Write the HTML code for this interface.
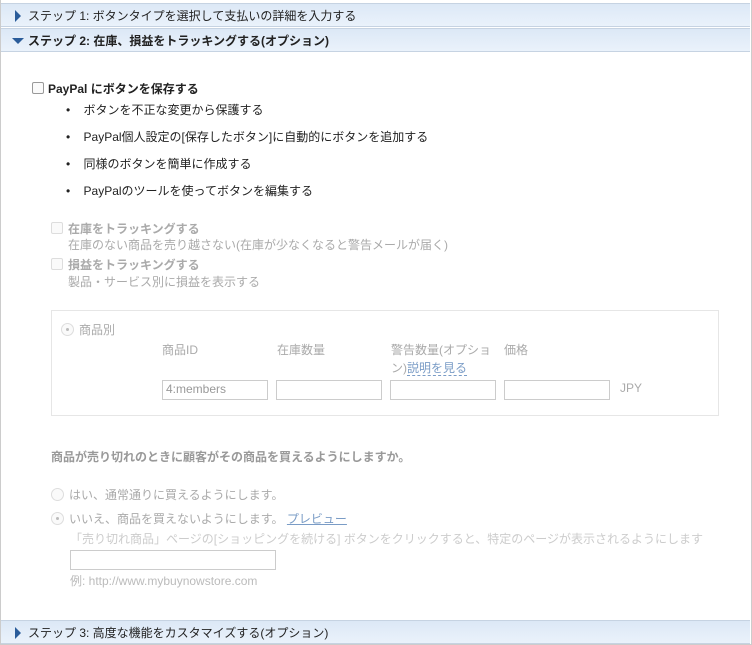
<!DOCTYPE html>
<html><head><meta charset="utf-8"><style>
body{margin:0;width:752px;height:645px;background:#fff;font-family:"Liberation Sans","Noto Sans CJK JP",sans-serif;font-size:12px;color:#333;position:relative;overflow:hidden}
.a{position:absolute;white-space:nowrap}
.hd{position:absolute;left:1px;width:749px;height:22px;background:linear-gradient(#dce8f6,#eaf2fb);border-top:1px solid #c6d3e2;border-bottom:1px solid #c6d3e2;line-height:24px;font-size:12px;color:#222}
.tri{position:absolute;left:14px;top:6px;width:0;height:0;border-left:6px solid #2a5c9a;border-top:6px solid transparent;border-bottom:6px solid transparent}
.trid{position:absolute;left:11px;top:9px;border-top:6px solid #2a5c9a;border-left:6px solid transparent;border-right:6px solid transparent}
.cb{position:absolute;width:10px;height:10px;border:1px solid #aaa;border-radius:2px;background:#fafafa}
.g{color:#aaa}
.rd{position:absolute;width:11px;height:11px;border:1px solid #ddd;border-radius:50%;background:#fafafa}
.rd.on:after{content:"";position:absolute;left:4px;top:4px;width:3px;height:3px;border-radius:50%;background:#bbb}
.in{position:absolute;height:18px;border:1px solid #ccc;background:#fff;box-sizing:border-box;color:#999;font-size:12px;line-height:16px;padding-left:3px}
</style></head><body>
<div style="position:absolute;left:0;top:0;width:750px;height:644px;border-left:1px solid #ccc;border-right:1px solid #ccc;border-bottom:1px solid #ccc"></div>
<div class="hd" style="top:3px"><span class="tri"></span><span class="a" style="left:27px">ステップ 1: ボタンタイプを選択して支払いの詳細を入力する</span></div>
<div class="hd" style="top:28px;font-weight:bold"><span class="trid"></span><span class="a" style="left:27px">ステップ 2: 在庫、損益をトラッキングする(オプション)</span></div>

<span class="cb" style="left:32px;top:82px;border-color:#999"></span>
<span class="a" style="left:48px;top:80px;font-weight:bold;color:#222">PayPal にボタンを保存する</span>
<span class="a" style="left:66px;top:101px;color:#222">•&nbsp;&nbsp;&nbsp;&nbsp;ボタンを不正な変更から保護する</span>
<span class="a" style="left:66px;top:128px;color:#222">•&nbsp;&nbsp;&nbsp;&nbsp;PayPal個人設定の[保存したボタン]に自動的にボタンを追加する</span>
<span class="a" style="left:66px;top:155px;color:#222">•&nbsp;&nbsp;&nbsp;&nbsp;同様のボタンを簡単に作成する</span>
<span class="a" style="left:66px;top:182px;color:#222">•&nbsp;&nbsp;&nbsp;&nbsp;PayPalのツールを使ってボタンを編集する</span>

<span class="cb" style="left:51px;top:222px;border-color:#ddd"></span>
<span class="a g" style="left:68px;top:220px;font-weight:bold">在庫をトラッキングする</span>
<span class="a g" style="left:68px;top:236px">在庫のない商品を売り越さない(在庫が少なくなると警告メールが届く)</span>
<span class="cb" style="left:51px;top:258px;border-color:#ddd"></span>
<span class="a g" style="left:68px;top:256px;font-weight:bold">損益をトラッキングする</span>
<span class="a g" style="left:68px;top:273px">製品・サービス別に損益を表示する</span>

<div style="position:absolute;left:51px;top:310px;width:666px;height:104px;border:1px solid #e6e6e6"></div>
<span class="rd on" style="left:61px;top:323px"></span>
<span class="a g" style="left:79px;top:321px">商品別</span>
<span class="a g" style="left:162px;top:341px">商品ID</span>
<span class="a g" style="left:277px;top:341px">在庫数量</span>
<span class="a g" style="left:391px;top:341px">警告数量(オプショ</span>
<span class="a g" style="left:391px;top:359px">ン)<span style="color:#7a9cc6;border-bottom:1px dashed #7a9cc6">説明を見る</span></span>
<span class="a g" style="left:504px;top:341px">価格</span>
<div class="in" style="left:162px;top:380px;width:106px;height:20px">4:members</div>
<div class="in" style="left:276px;top:380px;width:106px;height:20px"></div>
<div class="in" style="left:390px;top:380px;width:106px;height:20px"></div>
<div class="in" style="left:504px;top:380px;width:106px;height:20px"></div>
<span class="a g" style="left:620px;top:381px">JPY</span>

<span class="a g" style="left:51px;top:448px;font-weight:bold;color:#999">商品が売り切れのときに顧客がその商品を買えるようにしますか。</span>
<span class="rd" style="left:51px;top:488px"></span>
<span class="a g" style="left:69px;top:486px">はい、通常通りに買えるようにします。</span>
<span class="rd on" style="left:51px;top:512px"></span>
<span class="a g" style="left:69px;top:510px">いいえ、商品を買えないようにします。 <span style="color:#7a9cc6;text-decoration:underline">プレビュー</span></span>
<span class="a" style="left:70px;top:530px;color:#ccc">「売り切れ商品」ページの[ショッピングを続ける] ボタンをクリックすると、特定のページが表示されるようにします</span>
<div class="in" style="left:70px;top:550px;width:206px;height:20px"></div>
<span class="a" style="left:70px;top:572px;color:#bbb">例: http://www.mybuynowstore.com</span>

<div class="hd" style="top:620px"><span class="tri"></span><span class="a" style="left:27px">ステップ 3: 高度な機能をカスタマイズする(オプション)</span></div>
</body></html>
